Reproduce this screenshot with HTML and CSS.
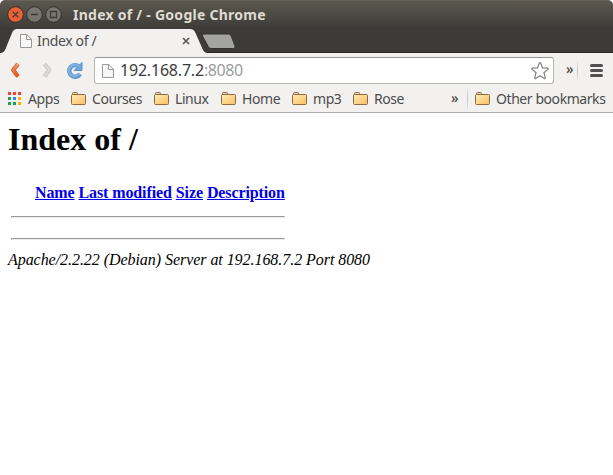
FILE: index.html
```html
<!DOCTYPE html>
<html lang="en">
<head>
<meta charset="utf-8">
<title>Index of /</title>
<link rel="stylesheet" href="styles.css">
</head>
<body>
<svg width="0" height="0" class="defs">
  <defs>
    <linearGradient id="fg" x1="0" y1="0" x2="1" y2="1"><stop offset="0" stop-color="#ffebb5"/><stop offset="1" stop-color="#fabf62"/></linearGradient>
    <linearGradient id="og" x1="0" y1="0" x2="0" y2="1"><stop offset="0" stop-color="#f2a06f"/><stop offset="1" stop-color="#e65317"/></linearGradient>
    <symbol id="folder" viewBox="0 0 15 13"><path d="M1.5 3V1.5Q1.5.5 2.5.5h3.2q.8 0 .8 1v1" fill="#efd9ae" stroke="#8c6b42"/><rect x=".5" y="2.5" width="14" height="10" rx="1" fill="url(#fg)" stroke="#8c6b42"/></symbol>
    <symbol id="doc" viewBox="0 0 12 14"><path d="M.5.5h6.3l4.700 4.700v8.300H.5z" fill="#f7f7f7" stroke="#999"/><path d="M6.500.5v5h5" fill="none" stroke="#999"/></symbol>
  </defs>
</svg>
<header class="frame">
  <div class="titlebar">
    <svg class="buttons" width="55" height="20" viewBox="0 0 55 20">
      <g stroke="#33322d"><circle cx="8.5" cy="9.5" r="7.8" fill="#ed6037"/><circle cx="27.5" cy="9.5" r="7.8" fill="#77756d"/><circle cx="46.5" cy="9.5" r="7.8" fill="#77756d"/></g>
      <g fill="none" stroke="#3c3b37" stroke-width="1.3"><path d="M5.7 6.7l5.6 5.6M11.3 6.7l-5.6 5.6M24 9.5h7"/><path d="M43.5 6.5h6v6h-6z"/></g>
    </svg>
    <span class="title">Index of / - Google Chrome</span>
  </div>
  <div class="tabs">
    <svg class="tabshape" width="240" height="25" viewBox="0 0 240 25">
      <path d="M0 25v-1Q4 24 5.500 20L12 4Q13.500 0 17 0H190Q194 0 195.500 4L203 21Q204.500 24 208 24H240v1z" fill="#f2f1f0"/>
      <path d="M206 5h24.500q2 0 2.700 2l3.800 10q.7 2.500-1.500 2.500H213q-2 0-2.800-2L204.500 7q-.8-2 1.500-2z" transform="translate(-2 0)" fill="#a3a3a2" stroke="#343330"/>
    </svg>
    <div class="tab">
      <svg width="12" height="14"><use href="#doc"/></svg>
      <span class="tabname">Index of /</span>
      <svg class="close" width="8" height="8"><path d="M1 1l6 6M7 1L1 7" stroke="#5b5b5b" stroke-width="1.700"/></svg>
    </div>
  </div>
</header>
<div class="toolbar">
  <svg class="nav" width="88" height="32" viewBox="0 0 88 32">
    <path d="M18 11L13.200 17l4.800 6.500" fill="none" stroke="#cf5a2a" stroke-width="4.200" stroke-linecap="butt" stroke-linejoin="round"/>
    <path d="M18 11L13.200 17l4.800 6.500" fill="none" stroke="url(#og)" stroke-width="2.600" stroke-linecap="butt" stroke-linejoin="round"/>
    <path d="M44.500 11L49.300 17l-4.800 6.500" fill="none" stroke="#c9c8c6" stroke-width="4.200" stroke-linejoin="round"/>
    <path d="M44.500 11L49.300 17l-4.800 6.500" fill="none" stroke="#dad9d7" stroke-width="2.600" stroke-linejoin="round"/>
    <path d="M78.800 13.500A5.800 5.800 0 1 0 80 21" fill="none" stroke="#5b8fc6" stroke-width="4.400"/>
    <path d="M82 9.500v8h-8z" fill="#72a7dc" stroke="#5b8fc6"/>
    <path d="M78.800 13.500A5.800 5.800 0 1 0 79.600 20.600" fill="none" stroke="#7db0e0" stroke-width="2.800"/>
  </svg>
  <div class="omnibox">
    <svg width="12" height="14"><use href="#doc"/></svg>
    <span class="url">192.168.7.2<i>:8080</i></span>
    <svg class="star" width="20" height="19" viewBox="0 0 20 19"><path d="M10 1.500q.5 0 .8.800l1.700 4.600 5 .3q1.300.2.400 1.200l-4 3.300 1.400 4.900q.2 1.300-1 .8L10 14.700l-4.300 2.700q-1.200.5-1-.8l1.400-4.900-4-3.300q-.9-1 .4-1.200l5-.3 1.700-4.600q.3-.8.800-.8z" fill="#fff" stroke="#808080" stroke-width="1.200"/></svg>
  </div>
  <span class="more">»</span>
  <span class="sep"></span>
  <svg class="menu" width="13" height="13"><path d="M1.500 1.500h10M1.500 6.500h10M1.500 11.500h10" stroke="#505050" stroke-width="3" stroke-linecap="round"/></svg>
</div>
<nav class="bookmarks">
  <svg class="apps" width="14" height="13"><path d="M0 0h3v3H0zM5 0h3v3H5zM10 0h3v3h-3z" fill="#ea4335"/><path d="M0 5h3v3H0zM0 10h3v3H0zM5 10h3v3H5z" fill="#1f9d58"/><path d="M5 5h3v3H5z" fill="#2b83ed"/><path d="M10 5h3v3h-3zM10 10h3v3h-3z" fill="#f9b500"/></svg>
  <span class="label w-apps">Apps</span>
  <svg class="folder"><use href="#folder"/></svg><span class="label w-courses">Courses</span>
  <svg class="folder"><use href="#folder"/></svg><span class="label w-linux">Linux</span>
  <svg class="folder"><use href="#folder"/></svg><span class="label w-home">Home</span>
  <svg class="folder"><use href="#folder"/></svg><span class="label w-mp3">mp3</span>
  <svg class="folder"><use href="#folder"/></svg><span class="label w-rose">Rose</span>
  <span class="more over">»</span>
  <span class="sep"></span>
  <svg class="folder other"><use href="#folder"/></svg><span class="label w-other">Other bookmarks</span>
</nav>
<main>
  <h1>Index of /</h1>
  <table>
    <tr class="head"><th class="icon"></th><th><a href="#">Name</a></th><th><a href="#">Last modified</a></th><th><a href="#">Size</a></th><th><a href="#">Description</a></th></tr>
    <tr><th colspan="5"><hr></th></tr>
    <tr><th colspan="5"><hr></th></tr>
  </table>
  <address>Apache/2.2.22 (Debian) Server at 192.168.7.2 Port 8080</address>
</main>
</body>
</html>
```
FILE: styles.css
```css
* { box-sizing: border-box; }
body { margin: 0; height: 475px; overflow: hidden; background: #fff; font-family: "Noto Sans", "Open Sans", sans-serif; }
svg { display: block; flex: none; }
.defs { position: absolute; }
.frame { height: 53px; background: linear-gradient(#5c584f 0, #56534a 5px, #3c3b37 28px); border-top: 1px solid #67635a; border-radius: 5px 5px 0 0; }
.titlebar { display: flex; align-items: center; height: 28px; padding-left: 7px; }
.buttons { margin-top: -1px; }
.title { margin-left: 11px; color: #dfdbd2; font-weight: 700; font-size: 14px; line-height: 20px; white-space: pre; letter-spacing: 0.26px; }
.tabs { position: relative; height: 24px; border-bottom: 1px solid #2b2a27; }
.tabshape { position: absolute; left: 0; top: 0; }
.tab { position: relative; display: flex; align-items: center; width: 200px; height: 24px; padding-left: 20px; }
.tabname { width: 145px; margin-left: 5px; font-size: 14px; line-height: 20px; color: #4c4c4c; letter-spacing: -0.35px; }
.toolbar { display: flex; align-items: flex-start; height: 33px; background: #f2f1f0; }
.nav { margin-right: 6px; }
.omnibox { display: flex; align-items: center; width: 460px; height: 27px; margin-top: 4px; padding-left: 7px; background: #fff; border: 1px solid #b5b4b2; border-top-color: #969593; border-radius: 3px; }
.url { width: 410px; margin: -1px 0 0 6px; font-size: 16px; line-height: 22px; color: #3c3c3c; letter-spacing: -0.2px; white-space: nowrap; }
.url i { font-style: normal; color: #9c9c9c; letter-spacing: -0.4px; }
.more { width: 11px; margin: 6px 0 0 12px; font-size: 14px; line-height: 20px; font-weight: 500; color: #4c4c4c; }
.sep { width: 1px; height: 19px; margin-top: 8px; background: linear-gradient(#e7e9eb, #bdc4cb, #e7e9eb); }
.menu { margin: 11px 0 0 12px; }
.bookmarks { display: flex; align-items: center; height: 27px; padding-left: 8px; background: #f2f1f0; border-bottom: 1px solid #b0aeab; }
.folder { width: 15px; height: 13px; margin: -2px 6px 0 0; }
.label { flex: none; font-size: 14px; line-height: 20px; color: #4c4c4c; white-space: nowrap; letter-spacing: -0.43px; }
.apps { margin: -2px 6px 0 0; }
.w-apps { width: 43px; }
.w-courses { width: 62px; }
.w-linux { width: 46px; }
.w-home { width: 50px; }
.w-mp3 { width: 40px; }
.w-rose { width: 77px; }
.w-other { width: 112px; }
.over { margin: -2px 0 0; width: 16px; }
.bookmarks .sep { margin: 0; height: 22px; }
.other { margin-left: 7px; }
main { padding: 8px; font-family: "Liberation Serif", serif; font-size: 16px; color: #000; }
h1 { margin: 0 0 21px; font-size: 32px; line-height: 37px; }
table { border-spacing: 2px; line-height: 18px; }
th { padding: 1px; letter-spacing: -0.11px; }
.head th { height: 24px; }
.icon { width: 22px; }
a { color: #00e; text-decoration: underline; }
hr { height: 2px; margin: 8px 0; border: 1px solid #999; border-right-color: #eee; border-bottom-color: #eee; }
address { line-height: 18px; font-style: italic; letter-spacing: -0.052px; }
```
